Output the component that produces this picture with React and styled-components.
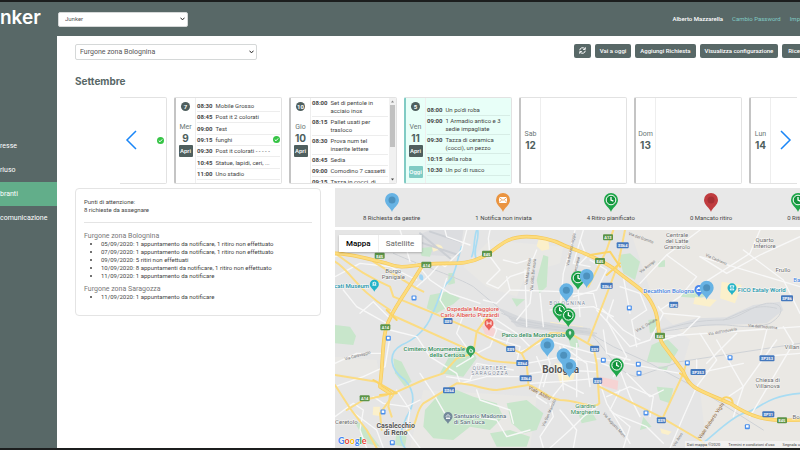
import React, { useState } from "react";
import styled, { createGlobalStyle, css } from "styled-components";

const DAYS = [
  {
    id: "wed",
    name: "Mer",
    number: 9,
    count: 7,
    spread: true,
    items: [
      ["08:30", "Mobile Grosso"],
      ["08:45", "Post it 2 colorati"],
      ["09:00", "Test"],
      ["09:15", "funghi", true],
      ["09:30", "Post it colorati - - - - -"],
      ["10:45", "Statue, lapidi, ceri, ..."],
      ["11:00", "Uno stadio"],
    ],
  },
  {
    id: "thu",
    name: "Gio",
    number: 10,
    count: 10,
    scroll: true,
    items: [
      ["08:00", "Set di pentole in acciaio inox"],
      ["08:15", "Pallet usati per trasloco"],
      ["08:30", "Prova num tel inserite lettere"],
      ["08:45", "Sedia"],
      ["09:00", "Comodino 7 cassetti"],
      ["09:15", "Tazza in cocci, di"],
    ],
  },
  {
    id: "fri",
    name: "Ven",
    number: 11,
    count: 5,
    today: true,
    items: [
      ["08:00", "Un po'di roba"],
      ["09:00", "1 Armadio antico e 3 sedie impagliate"],
      ["09:30", "Tazza di ceramica (cocci), un pezzo"],
      ["10:15", "della roba"],
      ["10:30", "Un po' di rusco"],
    ],
  },
  { id: "sat", name: "Sab", number: 12, items: [] },
  { id: "sun", name: "Dom", number: 13, items: [] },
  { id: "mon", name: "Lun", number: 14, items: [] },
];

const NOTICES = [
  {
    title: "Furgone zona Bolognina",
    rows: [
      "05/09/2020: 1 appuntamento da notificare, 1 ritiro non effettuato",
      "07/09/2020: 1 appuntamento da notificare, 1 ritiro non effettuato",
      "09/09/2020: 5 ritiri non effettuati",
      "10/09/2020: 8 appuntamenti da notificare, 1 ritiro non effettuato",
      "11/09/2020: 1 appuntamento da notificare",
    ],
  },
  {
    title: "Furgone zona Saragozza",
    rows: ["11/09/2020: 1 appuntamento da notificare"],
  },
];

const LEGEND = [
  { kind: "todo", label: "8 Richiesta da gestire" },
  { kind: "mail", label: "1 Notifica non inviata" },
  { kind: "planned", label: "4 Ritiro pianificato" },
  { kind: "missed", label: "0 Mancato ritiro" },
  { kind: "planned", label: "0 Ritirati" },
];

// map drawing units: three to one pixel
const PARKS = [
  "M15 285L60 290L78 318L70 345L15 340Z",
  "M300 195L350 185L390 205L370 222L320 250L290 235Z",
  "M355 130L372 128L375 160L355 165Z",
  "M268 55L310 50L300 80L275 78Z",
  "M640 75L655 80L650 170L628 190L620 150Z",
  "M545 205L585 208L560 230Z",
  "M865 75L900 70L930 95L915 150L880 130Z",
  "M360 375L420 350L440 385L400 440L330 430Z",
  "M955 270L985 265L985 300L960 310Z",
  "M965 345L1010 325L1045 360L1020 400L950 395Z",
  "M715 325L740 320L748 350L725 360Z",
  "M980 470L1030 475L1020 520L990 510Z",
  "M940 560L965 590L930 600Z",
  "M745 550L785 545L800 570L755 580Z",
  "M330 490L380 480L430 500L500 520L520 560L480 600L420 590L370 630L310 625L280 590L285 540Z",
  "M530 520L590 510L640 550L620 600L580 610L545 580Z",
  "M480 610L540 600L600 620L590 650L500 650Z",
  "M190 385L215 395L245 455L225 470L195 430Z",
  "M70 570L100 585L150 650L110 640Z",
  "M200 600L230 620L225 650L195 645Z",
  "M1060 185L1110 178L1135 195L1110 205L1050 200Z",
  "M985 95L1005 90L1005 110L985 112Z",
  "M985 410L1015 408L1010 420L985 420Z",
];

const SAND = [
  "M625 30L655 28L658 58L635 62L620 48Z",
  "M1175 155L1235 165L1215 220L1170 205Z",
  "M1095 200L1160 210L1140 230L1090 222Z",
  "M675 400L740 405L730 450L690 460Z",
  "M305 50C315 38 345 42 338 65L325 60L310 65Z",
  "M660 275L760 290L755 300L665 290Z",
  "M130 530L150 530L148 558L128 555Z",
  "M990 595L1025 605L1015 615L995 610Z",
];

const HOSPITALS = [
  "M455 288L492 285L498 315L470 325Z",
  "M810 440L865 452L862 480L810 465Z",
];

const WATER = [
  "M443 0C450 30 425 60 440 90",
  "M440 0C430 30 435 60 425 80",
  "M395 50C380 90 378 130 360 150C330 175 325 220 305 255C290 300 250 330 215 345C170 370 180 420 225 450C260 490 250 530 230 560C215 600 200 620 225 654",
  "M1100 654C1150 620 1190 570 1240 550C1290 540 1300 500 1410 490",
];

const RAILS = [
  "M510 240C540 260 560 290 600 290L780 310L850 350L960 400L1110 480L1300 600",
  "M515 250C560 270 600 275 650 285L800 310",
  "M545 275L640 290L770 296",
  "M540 265L620 280L760 305",
  "M980 305C1060 280 1110 270 1180 270C1230 265 1260 230 1310 220C1360 215 1370 250 1320 280C1280 295 1240 290 1190 285C1100 280 1060 300 980 305",
  "M1180 270C1250 240 1280 220 1340 235",
  "M190 70C280 110 380 140 430 170L520 245",
  "M780 310C840 370 860 430 920 440L1050 395L1410 340",
];

const STREETS = [
  "M15 140L90 100L180 110L260 150",
  "M15 80L65 60L120 65",
  "M90 250L130 215L175 260",
  "M40 180L80 230L170 280",
  "M180 320L165 410L100 440L15 470",
  "M210 0L230 60L240 95",
  "M410 0L395 60L345 110L330 100L300 135L260 170",
  "M260 100L300 150L360 190L450 220",
  "M350 145L330 210L350 240",
  "M345 0L350 20L420 45",
  "M480 0L475 25L480 80L510 120L470 160L505 175L540 140L600 120",
  "M520 90L560 100L610 85L620 60",
  "M530 140L540 180L700 185",
  "M540 180L500 220L460 210",
  "M585 120L590 290",
  "M612 110L600 220L560 270",
  "M630 190L640 290",
  "M735 0L720 60L700 130L690 240",
  "M760 0L730 100L780 110",
  "M750 30L770 80L740 110L750 260",
  "M780 90L830 120L800 180L730 200",
  "M660 240L790 230L850 260",
  "M800 240L900 350L960 330L1000 250L985 230",
  "M815 235L880 300L930 330",
  "M850 210L830 270L890 380L850 440",
  "M870 170L930 190L950 240L905 270L920 350",
  "M820 300L830 370L900 390",
  "M800 385L860 395L1050 430",
  "M720 190L790 190L800 230",
  "M880 140L900 250",
  "M930 160L1010 75L1110 0",
  "M1010 75L1100 140L1050 200L990 240",
  "M1110 80L1410 170",
  "M1110 80L1190 130L1290 75L1410 20",
  "M1240 60L1360 150L1410 250",
  "M1290 0L1260 70L1080 185",
  "M1000 250L1110 260L1060 310L1000 330",
  "M990 320L1410 290",
  "M1110 310L1160 390L1100 470L1060 560L1020 654",
  "M1160 330L1240 470L1180 510",
  "M1220 310L1130 400",
  "M1310 300L1290 380L1410 370",
  "M1340 330L1240 470L1210 560",
  "M1360 290L1390 340L1260 560",
  "M1100 390L1100 430L1240 400",
  "M560 370L650 330L700 345L790 370",
  "M590 400L700 380L800 400",
  "M600 430L680 420L800 425",
  "M600 460L690 455L800 445",
  "M640 340L660 400L640 470",
  "M690 350L700 480",
  "M740 340L740 500",
  "M620 380L640 430L620 500L650 520",
  "M660 510L700 460L760 490",
  "M700 350L770 400L780 470",
  "M815 400L870 420L900 500L930 560",
  "M810 460L830 520L860 570L900 640",
  "M830 500L900 470L970 500L960 560",
  "M870 480L840 540L900 590L880 654",
  "M890 430L960 500L1000 480",
  "M800 530L760 560L720 600L660 654",
  "M660 520L670 560L630 620L640 654",
  "M690 540L740 600L730 654",
  "M850 550L950 590L1000 640",
  "M400 255L380 310L430 380L380 410",
  "M440 230L460 280L540 310L530 340",
  "M470 240L500 300L480 350L440 370",
  "M450 310L570 350L560 400",
  "M500 270L560 310L600 350",
  "M270 430L310 490L350 560",
  "M300 380L380 430L390 460L470 440L590 440",
  "M350 440L420 450L440 400L550 420",
  "M200 480L240 540L230 600L270 654",
  "M130 500L160 520L230 530L270 510",
  "M180 300L260 320L300 380",
  "M15 400L80 370L160 370",
  "M15 560L70 520L100 540L90 600L110 654",
  "M60 540L140 600L160 654",
  "M440 560L500 570L530 620L600 600",
  "M440 480L450 510L540 540L550 580",
];

const MAIN_ROADS = [
  "M15 70C60 100 90 130 180 170L190 200L300 245L440 305L575 370L590 400L595 460",
  "M15 95C60 120 80 180 180 240",
  "M130 95L260 175L280 185",
  "M185 255L440 370C470 400 520 395 570 400",
  "M575 370L660 310L720 310L790 350L800 400L808 520C790 540 740 510 690 510C650 505 640 480 595 465",
  "M775 335L835 180L865 100L885 0",
  "M775 170L830 60L850 0",
  "M190 490L280 450L340 430L380 385L430 370L440 305L480 250",
  "M180 495L175 530L185 560M225 605C270 590 250 550 280 520L380 460C430 460 460 480 500 480L595 465",
  "M15 465L60 535L110 600L140 654",
  "M808 470L990 560L1110 630L1130 650",
  "M1000 560L1060 430L1070 395",
  "M15 435L140 455L190 495L150 550L155 600",
  "M50 540L100 510L170 495",
];

const HIGHWAYS = [
  "M15 70C60 70 130 90 170 100C220 120 240 105 290 103C360 95 400 110 460 80C500 60 520 20 590 20C640 20 670 30 700 45C760 70 800 80 850 115C930 180 950 180 975 240C990 280 980 320 1000 345L1060 425C1080 480 1110 480 1200 520C1260 560 1300 575 1410 570",
  "M275 110C240 170 200 220 180 265C160 300 160 350 155 420L150 470L180 490",
];

const SHIELDS = [
  [149, 77, "E45", "green"],
  [289, 104, "A14", "green"],
  [471, 71, "E45", "green"],
  [834, 22, "A13", "green"],
  [810, 93, "E45", "green"],
  [166, 292, "A14", "green"],
  [104, 505, "A14", "green"],
  [990, 317, "E45", "green"],
  [1356, 571, "E45", "green"],
  [878, 46, "SS64"],
  [830, 167, "SS64"],
  [1031, 224, "SP5"],
  [1371, 205, "SP86"],
  [354, 273, "SS9"],
  [542, 357, "SS9"],
  [577, 399, "SS64"],
  [587, 445, "SS64"],
  [357, 481, "SS64"],
  [794, 356, "SS9"],
  [803, 452, "SS9"],
  [1104, 426, "SP253"],
  [1311, 385, "SP253"],
  [994, 571, "SS9"],
  [1315, 553, "SP31"],
];

const STATIONS = [
  [252, 204],
  [175, 325],
  [159, 546],
  [187, 638],
  [898, 234],
  [820, 391],
  [925, 403],
  [927, 430],
  [1072, 399],
  [1200, 383],
  [948, 549],
  [1252, 590],
];

const STREET_NAMES = [
  [45, 391, -15, "Via Caravaggio"],
  [592, 165, -82, "Via Marco Polo"],
  [608, 182, -84, "Via della Beverara"],
  [716, 108, -78, "Via dell'Arcoveggio"],
  [735, 150, -78, "Via Ferrarese"],
  [895, 14, 20, "Via del Gomito"],
  [932, 130, -38, "Via Rovigo"],
  [1126, 78, 24, "Via Cadriano"],
  [920, 307, -30, "Via S. Donato"],
  [1135, 316, -10, "Via dell'Industria"],
  [1254, 290, 5, "Via dell'Industria"],
  [643, 590, -66, "Via San Mamolo"],
  [818, 552, 48, "Via Augusto Murri"],
  [1035, 650, -58, "Via Arno"],
];

const PLACES = [
  [190, 129, ["Borgo", "Panigale"], "#6b6b6b", 6],
  [1041, 21, ["Centrale", "del Latte", "Granarolo"], "#6b6b6b", 6],
  [1304, 37, ["Quarto", "Inferiore"], "#6b6b6b", 6],
  [1359, 126, ["Frullo"], "#6b6b6b", 6],
  [1386, 357, ["Villan"], "#6b6b6b", 6],
  [1313, 455, ["Chiesa di", "Villanova"], "#6b6b6b", 6],
  [1398, 567, ["Bo"], "#6b6b6b", 6],
  [49, 583, ["Ceretolo"], "#6b6b6b", 6],
  [766, 533, ["Giardini", "Margherita"], "#2f8a58", 6],
  [1400, 157, ["Ba"], "#3f7fe0", 6],
];

const POI_LABELS = [
  [117, 175, ["cati Museum"], "#1b93a8", "end"],
  [507, 242, ["Ospedale Maggiore", "Carlo Alberto Pizzardi"], "#e0514a", "end"],
  [706, 322, ["Parco della Montagnola"], "#2f8a58", "end"],
  [405, 364, ["Cimitero Monumentale", "della Certosa"], "#2f8a58", "end"],
  [371, 563, ["Santuario Madonna", "di San Luca"], "#607684", "start"],
  [1092, 190, ["Decathlon Bologna"], "#3f7fe0", "end"],
  [1223, 187, ["FICO Eataly World"], "#1b93a8", "start"],
];

const POIS = [
  [133, 185, "#22b3c8", "M-2 1H2M-2 -1L0 -2L2 -1M-1 1V-1M1 1V-1"],
  [477, 302, "#ea5f57", "M-2 -2V2M2 -2V2M-2 0H2"],
  [422, 383, "#33a35c", "M-1 2V0A1 1 0 1 1 1 0H2V2Z"],
  [720, 332, "#33a35c", "M0 2V0M-1 0L0 -2L1 0Z"],
  [354, 582, "#73899a", "M-2 2H2M-2 0L0 -2L2 0M-1 0V2M1 0V2"],
  [1107, 201, "#4a86ee", "M-2 -1H2V2H-2ZM-1 -1V-2H1V-1"],
  [1206, 196, "#22b3c8", "M-2 -2H2L1 0V1L2 2H-2L-1 1V0Z"],
];

const MARKERS = [
  [744, 180, "planned"],
  [770, 174, "todo"],
  [709, 217, "todo"],
  [689, 277, "planned"],
  [715, 292, "planned"],
  [652, 381, "todo"],
  [718, 443, "todo"],
  [701, 412, "todo"],
  [860, 442, "planned"],
  [1130, 209, "todo"],
];

const PIN_COLORS = {
  todo: "#67b3e4",
  mail: "#ea9440",
  planned: "#1fa64a",
  missed: "#c03c3f",
};

const place = (x, y) => `translate(${(x - 15) / 3} ${y / 3})`;

function PinShape({ kind }) {
  return (
    <g>
      <path
        d="M0 0C-1 -4 -7 -7 -7 -12A7 7 0 1 1 7 -12C7 -7 1 -4 0 0Z"
        fill={PIN_COLORS[kind]}
      />
      {kind === "todo" && <circle cy="-12" r="3.5" fill="#4d91bd" />}
      {kind === "missed" && <circle cy="-12" r="3.5" fill="#a52f33" />}
      {kind === "mail" && (
        <g>
          <rect x="-4" y="-15" width="8" height="6" rx="0.6" fill="#fff" />
          <path d="M-4 -14.6L0 -11.6L4 -14.6M-4 -9.4L-1.4 -12M4 -9.4L1.4 -12" fill="none" stroke="#ea9440" strokeWidth="0.8" />
        </g>
      )}
      {kind === "planned" && (
        <g>
          <circle cy="-12" r="4.8" fill="#12933c" stroke="#fff" strokeWidth="1" />
          <path d="M0 -15V-12L2.4 -10.8" fill="none" stroke="#fff" strokeWidth="1.3" />
        </g>
      )}
    </g>
  );
}

function CheckMark() {
  return (
    <Check viewBox="0 0 14 14" aria-label="Confermato">
      <circle cx="7" cy="7" r="7" fill="#35c445" />
      <path d="M3.5 7.2L6 9.6L10.4 4.8" fill="none" stroke="#fff" strokeWidth="2" />
    </Check>
  );
}

function Day({ day }) {
  return (
    <DayCard $today={day.today}>
      <DaySide $empty={!day.count}>
        {day.count && <Count>{day.count}</Count>}
        <DayName>{day.name}</DayName>
        <DayNumber>{day.number}</DayNumber>
        {day.count && <DayButton type="button">Apri</DayButton>}
        {day.today && (
          <DayButton type="button" $light>
            Oggi
          </DayButton>
        )}
      </DaySide>
      <Agenda $spread={day.spread} $centered={day.today}>
        {day.items.map(([time, text, done]) => (
          <AgendaRow key={time}>
            <Time>{time}</Time>
            <AgendaText>{text}</AgendaText>
            {done && <CheckMark />}
          </AgendaRow>
        ))}
      </Agenda>
      {day.scroll && (
        <ScrollTrack aria-hidden="true">
          <svg width="7" height="7" viewBox="0 0 7 7">
            <path d="M2 4.5L3.5 2.5L5 4.5Z" fill="#888" />
          </svg>
          <ScrollThumb />
          <svg width="7" height="7" viewBox="0 0 7 7">
            <path d="M2 2.5L3.5 4.5L5 2.5Z" fill="#444" />
          </svg>
        </ScrollTrack>
      )}
    </DayCard>
  );
}

function Lines({ rows, step, ...rest }) {
  return (
    <text {...rest}>
      {rows.map((row, i) => (
        <tspan key={row} x="0" dy={i ? step : 0}>
          {row}
        </tspan>
      ))}
    </text>
  );
}

function CityMap() {
  return (
    <MapSvg viewBox="0 0 465 218" preserveAspectRatio="xMinYMin slice" aria-label="Mappa di Bologna">
      <g transform="scale(0.333333) translate(-15 0)" fill="none" strokeLinejoin="round" strokeLinecap="round">
        <rect x="0" y="0" width="1420" height="660" fill="#e5e5e5" />
        <path d="M900 0H1420V660H1130L1110 480L1060 400L1080 330L980 240L950 150Z" fill="#eae8e4" />
        <path d="M480 30L700 50L690 100L590 130L560 200L470 170L400 110Z" fill="#e9e8e5" />
        <path d="M15 380L140 390L150 450L15 430ZM280 480L620 500L600 654H240Z" fill="#e9e8e5" />
        <path d="M230 30L300 0L400 0L390 80L290 75Z" fill="#dcdde0" />
        {PARKS.map((d) => (
          <path key={d} d={d} fill="#c8e6cb" />
        ))}
        {SAND.map((d) => (
          <path key={d} d={d} fill="#fbf0cb" />
        ))}
        {HOSPITALS.map((d) => (
          <path key={d} d={d} fill="#f6d3d3" />
        ))}
        <path d="M510 235L580 265L640 275L780 295L800 320L640 300L560 290Z" fill="#d6d8db" />
        <path d="M980 300L1100 265L1190 262L1270 225L1350 215L1360 240L1310 280L1180 285L1080 290Z" fill="#dcdee1" />
        {WATER.map((d) => (
          <path key={d} d={d} stroke="#a8dcf3" strokeWidth="5" />
        ))}
        <path d="M268 135C275 128 284 140 278 152C268 150 266 142 268 135Z" fill="#9ed4f5" />
        {RAILS.map((d) => (
          <path key={d} d={d} stroke="#cfd2d6" strokeWidth="3" />
        ))}
        <path d="M235 25L385 75M270 10L360 85M300 5L390 35" stroke="#cccfd4" strokeWidth="6" />
        {STREETS.map((d) => (
          <path key={d} d={d} stroke="#f8f8f8" strokeWidth="4" />
        ))}
        {MAIN_ROADS.map((d) => (
          <path key={d} d={d} stroke="#fbdc83" strokeWidth="6" />
        ))}
        {HIGHWAYS.map((d) => (
          <path key={d} d={d} stroke="#f5c95c" strokeWidth="11" />
        ))}
        {HIGHWAYS.map((d) => (
          <path key={d} d={d} stroke="#fddc7c" strokeWidth="7" />
        ))}
        <path
          d="M780 75L840 65L870 110M830 135L870 100M130 450L200 490L150 495M1175 510A18 18 0 0 1 1208 518M1050 430L1075 450M170 240L200 270"
          stroke="#fbd468"
          strokeWidth="6"
        />
      </g>

      {STREET_NAMES.map(([x, y, angle, name]) => (
        <StreetName key={`${x}-${y}`} transform={`${place(x, y)} rotate(${angle})`}>
          {name}
        </StreetName>
      ))}
      <RoadName transform={`${place(594, 476)} rotate(28)`}>Viale Aldini</RoadName>
      <RoadName transform={`${place(1112, 628)} rotate(-56)`}>Viale Roberto Vighi</RoadName>

      {SHIELDS.map(([x, y, name, color]) => {
        const width = name.length * 3 + (color ? 1 : 0);
        return (
          <g key={`${x}-${y}`} transform={place(x, y)}>
            <rect x={-width / 2} y="-3" width={width} height="6" rx="1" fill={color ? "#5c9448" : "#4478bd"} />
            <ShieldText y="2">{name}</ShieldText>
          </g>
        );
      })}
      {STATIONS.map(([x, y]) => (
        <g key={`${x}-${y}`} transform={place(x, y)}>
          <rect x="-2.5" y="-2.5" width="5" height="5" rx="1" fill="#4b90ec" />
          <rect x="-1.3" y="-1.5" width="2.6" height="2.4" fill="#fff" />
        </g>
      ))}

      {PLACES.map(([x, y, rows, color, size]) => (
        <g key={rows[0]} transform={place(x, y)}>
          <PlaceName as={Lines} rows={rows} step={6} fill={color} fontSize={size} />
        </g>
      ))}
      <g transform={place(713, 215)}>
        <Quarter as={Lines} rows={["BOLOGNINA"]} step={5} y="3" />
      </g>
      <g transform={place(480, 419)}>
        <Quarter as={Lines} rows={["QUARTIERE", "SARAGOZZA"]} step={5} />
      </g>
      <g transform={place(197, 593)}>
        <TownName as={Lines} rows={["Casalecchio", "di Reno"]} step={7} />
      </g>
      <g transform={place(692, 429)}>
        <CityName>Bologna</CityName>
      </g>
      {POI_LABELS.map(([x, y, rows, color, anchor]) => (
        <g key={rows[0]} transform={place(x, y)}>
          <PoiName as={Lines} rows={rows} step={6} fill={color} textAnchor={anchor} />
        </g>
      ))}
      {POIS.map(([x, y, color, icon]) => (
        <g key={`${x}-${y}`} transform={place(x, y)}>
          <path d="M0 0C-1 -3 -4.5 -4 -4.5 -7.5A4.5 4.5 0 1 1 4.5 -7.5C4.5 -4 1 -3 0 0Z" fill={color} />
          <path d={icon} transform="translate(0 -7.5)" fill="none" stroke="#fff" strokeWidth="0.9" />
        </g>
      ))}
      {MARKERS.map(([x, y, kind]) => (
        <g key={`${x}-${y}`} transform={place(x, y)}>
          <PinShape kind={kind} />
        </g>
      ))}
      <GoogleMark x="3" y="214">
        <tspan fill="#4285f4">G</tspan>
        <tspan fill="#ea4335">o</tspan>
        <tspan fill="#fbbc05">o</tspan>
        <tspan fill="#4285f4">g</tspan>
        <tspan fill="#34a853">l</tspan>
        <tspan fill="#ea4335">e</tspan>
      </GoogleMark>
    </MapSvg>
  );
}

function App() {
  const [mapType, setMapType] = useState("Mappa");

  return (
    <Shell>
      <GlobalStyle />
      <Header>
        <Logo href="#home">nker</Logo>
        <HeaderSelect aria-label="Azienda" defaultValue="Junker">
          <option>Junker</option>
        </HeaderSelect>
        <UserLinks>
          <UserName>Alberto Mazzarella</UserName>
          <UserLink href="#password">Cambio Password</UserLink>
          <UserLink href="#settings">Imp</UserLink>
        </UserLinks>
      </Header>
      <Body>
        <Nav>
          <NavLink href="#interesse">resse</NavLink>
          <NavLink href="#riuso">riuso</NavLink>
          <NavLink href="#ingombranti" $active>
            branti
          </NavLink>
          <NavLink href="#comunicazione">comunicazione</NavLink>
        </Nav>
        <Main>
          <Toolbar>
            <VanSelect aria-label="Furgone" defaultValue="Furgone zona Bolognina">
              <option>Furgone zona Bolognina</option>
            </VanSelect>
            <Actions>
              <ActionButton type="button" aria-label="Aggiorna">
                <svg width="7" height="7" viewBox="0 0 14 14" fill="none" stroke="#fff" strokeWidth="2">
                  <path d="M1.5 6.5A5.5 5.5 0 0 1 11.5 3.8M12.5 7.5A5.5 5.5 0 0 1 2.5 10.2" />
                  <path d="M12.5 0.5V4.8H8.2M1.5 13.5V9.2H5.8" />
                </svg>
              </ActionButton>
              <ActionButton type="button">Vai a oggi</ActionButton>
              <ActionButton type="button">Aggiungi Richiesta</ActionButton>
              <ActionButton type="button">Visualizza configurazione</ActionButton>
              <ActionButton type="button" $flush>
                Rice
              </ActionButton>
            </Actions>
          </Toolbar>
          <Month>Settembre</Month>
          <Carousel>
            <Track>
              <PreviousDay>
                <CheckMark />
              </PreviousDay>
              {DAYS.map((day) => (
                <Day key={day.id} day={day} />
              ))}
            </Track>
            <Arrow type="button" aria-label="Precedente">
              <svg width="12" height="20" viewBox="0 0 12 20">
                <path d="M11 1L2 10L11 19" fill="none" stroke="#1a86f7" strokeWidth="1.5" />
              </svg>
            </Arrow>
            <Arrow type="button" aria-label="Successivo" $next>
              <svg width="12" height="20" viewBox="0 0 12 20">
                <path d="M1 1L10 10L1 19" fill="none" stroke="#1a86f7" strokeWidth="1.5" />
              </svg>
            </Arrow>
          </Carousel>
          <Columns>
            <Notices>
              <Summary>
                Punti di attenzione:
                <br />8 richieste da assegnare
              </Summary>
              {NOTICES.map((notice) => (
                <section key={notice.title}>
                  <NoticeTitle>{notice.title}</NoticeTitle>
                  <NoticeList>
                    {notice.rows.map((row) => (
                      <li key={row}>{row}</li>
                    ))}
                  </NoticeList>
                </section>
              ))}
            </Notices>
            <MapColumn>
              <Legend>
                {LEGEND.map((item) => (
                  <LegendItem key={item.label}>
                    <svg width="16" height="20" viewBox="-8 -20 16 20">
                      <PinShape kind={item.kind} />
                    </svg>
                    {item.label}
                  </LegendItem>
                ))}
              </Legend>
              <MapBox>
                <CityMap />
                <MapTypes>
                  {["Mappa", "Satellite"].map((type) => (
                    <MapType
                      key={type}
                      type="button"
                      $active={mapType === type}
                      onClick={() => setMapType(type)}
                    >
                      {type}
                    </MapType>
                  ))}
                </MapTypes>
                <Credits>
                  <span>Dati mappa ©2020</span>
                  <a href="#termini">Termini e condizioni d'uso</a>
                  <a href="#segnala">Segnala u</a>
                </Credits>
              </MapBox>
            </MapColumn>
          </Columns>
        </Main>
      </Body>
    </Shell>
  );
}

const GlobalStyle = createGlobalStyle`
  * {
    box-sizing: border-box;
  }

  body {
    margin: 0;
    font-family: Roboto, "Liberation Sans", sans-serif;
    font-size: 6px;
    line-height: 8px;
    color: #444;
    background: #fff;
  }

  button,
  select {
    font-family: inherit;
    font-size: inherit;
    line-height: inherit;
  }

  a {
    color: inherit;
    text-decoration: none;
  }
`;

const Shell = styled.div`
  display: flex;
  flex-direction: column;
  min-height: 100vh;
  overflow: hidden;
  border-top: 2px solid #1c1e1e;
  border-bottom: 2px solid #1c1e1e;
`;

const Header = styled.header`
  display: flex;
  align-items: center;
  height: 34px;
  overflow: hidden;
  background: #586867;
`;

const Logo = styled.a`
  flex: 0 0 58px;
  padding-bottom: 2px;
  font-family: Inter, sans-serif;
  font-size: 19px;
  font-weight: 600;
  line-height: 24px;
  color: #fff;
`;

const selectStyle = css`
  appearance: none;
  border: 1px solid #d5d8d8;
  border-radius: 2px;
  color: #555;
  background: #fff
    url("data:image/svg+xml,%3Csvg xmlns='http://www.w3.org/2000/svg' width='5' height='4'%3E%3Cpath d='M.5 .7L2.5 2.9L4.5 .7' fill='none' stroke='%23222' stroke-width='1'/%3E%3C/svg%3E")
    no-repeat right 2px center;
`;

const HeaderSelect = styled.select`
  ${selectStyle}
  width: 130px;
  height: 15px;
  padding: 0 6px;
`;

const UserLinks = styled.div`
  display: flex;
  gap: 9px;
  margin-left: auto;
  white-space: nowrap;
`;

const UserName = styled.span`
  font-weight: 500;
  color: #fff;
`;

const UserLink = styled.a`
  color: #80cbc4;
`;

const Body = styled.div`
  display: flex;
  flex: 1;
`;

const Nav = styled.nav`
  flex: 0 0 57px;
  padding-top: 98px;
  background: #586867;
`;

const NavLink = styled.a`
  display: flex;
  align-items: center;
  height: 24px;
  font-size: 7px;
  color: #fff;
  background: ${(props) => (props.$active ? "#62ae8a" : "transparent")};
`;

const Main = styled.main`
  flex: 1;
  min-width: 0;
  display: flex;
  flex-direction: column;
  padding: 8px 0 0 18px;
`;

const Toolbar = styled.div`
  display: flex;
  justify-content: space-between;
`;

const VanSelect = styled.select`
  ${selectStyle}
  width: 182px;
  height: 16px;
  padding: 0 4px;
  font-size: 7px;
`;

const Actions = styled.div`
  display: flex;
  gap: 4px;
`;

const ActionButton = styled.button`
  height: 14px;
  padding: ${(props) => (props.$flush ? "0 0 0 6px" : "0 5px")};
  border: 0;
  border-radius: ${(props) => (props.$flush ? "2px 0 0 2px" : "2px")};
  font-weight: 500;
  white-space: nowrap;
  color: #fff;
  background: #586867;
`;

const Month = styled.h1`
  margin: 14px 0 9px;
  font-family: Inter, sans-serif;
  font-size: 10px;
  font-weight: 700;
  line-height: 14px;
  color: #586867;
`;

const Carousel = styled.section`
  position: relative;
  margin: 0 3px 0 45px;
`;

const Track = styled.div`
  display: flex;
  gap: 7px;
  overflow: hidden;
`;

const PreviousDay = styled.div`
  flex: 0 0 47px;
  display: flex;
  align-items: center;
  justify-content: flex-end;
  height: 87px;
  padding-right: 2px;
  border: 1px solid #e2e2e2;
  border-left: 0;
  border-radius: 0 2px 2px 0;
`;

const DayCard = styled.article`
  flex: 0 0 108px;
  display: flex;
  height: 87px;
  overflow: hidden;
  border: 1px solid #e2e2e2;
  border-left: 2px solid ${(props) => (props.$today ? "#80cbc4" : "#c4c4c4")};
  border-radius: 2px;
  background: ${(props) => (props.$today ? "#e8fff8" : "#fff")};
`;

const DaySide = styled.div`
  flex: 0 0 20px;
  display: flex;
  flex-direction: column;
  align-items: center;
  justify-content: ${(props) => (props.$empty ? "center" : "flex-start")};
  padding-top: ${(props) => (props.$empty ? 0 : "4px")};
  border-right: 1px solid #eee;
`;

const Count = styled.span`
  width: 9px;
  height: 9px;
  margin-bottom: 12px;
  border-radius: 50%;
  font-weight: 700;
  line-height: 9px;
  text-align: center;
  color: #fff;
  background: #4f5f5e;
`;

const DayName = styled.span`
  font-size: 7px;
  color: #6a7675;
`;

const DayNumber = styled.strong`
  font-family: Inter, sans-serif;
  font-size: 10px;
  line-height: 14px;
  color: #4f5f5e;
`;

const DayButton = styled.button`
  width: 14px;
  height: 12px;
  padding: 0;
  border: 0;
  border-radius: 1px;
  font-weight: 500;
  color: #fff;
  background: ${(props) => (props.$light ? "#80cbc4" : "#4f5f5e")};

  & + & {
    margin-top: 9px;
  }
`;

const Agenda = styled.div`
  flex: 1;
  min-width: 0;
  display: flex;
  flex-direction: column;
  justify-content: ${(props) => {
    if (props.$spread) return "space-between";
    return props.$centered ? "center" : "flex-start";
  }};
  padding: ${(props) => (props.$spread ? "3px 1px" : "0 1px")};
`;

const AgendaRow = styled.div`
  flex: none;
  display: flex;
  gap: 3px;
  padding: 1px 0;
  border-bottom: 1px solid rgba(0, 0, 0, 0.07);
`;

const Time = styled.strong`
  flex: 0 0 15px;
  font-weight: 700;
`;

const AgendaText = styled.span`
  flex: 1;
`;

const Check = styled.svg`
  flex: none;
  width: 7px;
  height: 7px;
`;

const ScrollTrack = styled.div`
  flex: 0 0 7px;
  display: flex;
  flex-direction: column;
  background: #f1f1f1;
`;

const ScrollThumb = styled.div`
  height: 42px;
  margin: 0 1px auto;
  background: #c1c1c1;
`;

const Arrow = styled.button`
  position: absolute;
  top: 33px;
  ${(props) => (props.$next ? "right: 5px" : "left: 5px")};
  height: 20px;
  padding: 0;
  border: 0;
  background: none;
`;

const Columns = styled.div`
  flex: 1;
  display: flex;
  align-items: flex-start;
  gap: 14px;
  padding-top: 4px;
`;

const Notices = styled.section`
  flex: 0 0 246px;
  padding: 9px 8px;
  border: 1px solid #e4e4e4;
  border-radius: 4px;
`;

const Summary = styled.p`
  margin: 0 0 9px;
  padding-bottom: 8px;
  border-bottom: 1px solid #e4e4e4;
`;

const NoticeTitle = styled.h2`
  margin: 0;
  font-size: 7px;
  font-weight: 400;
  color: #777;
`;

const NoticeList = styled.ul`
  margin: 0 0 5px;
  padding-left: 17px;
`;

const MapColumn = styled.div`
  flex: 1;
  align-self: stretch;
  min-width: 0;
  display: flex;
  flex-direction: column;
  gap: 3px;
`;

const Legend = styled.div`
  display: flex;
  gap: 55px;
  height: 39px;
  padding: 4px 0 0 28px;
  overflow: hidden;
  background: #e8e8e8;
`;

const LegendItem = styled.div`
  flex: none;
  display: flex;
  flex-direction: column;
  align-items: center;
  gap: 2px;
  white-space: nowrap;
`;

const MapBox = styled.div`
  position: relative;
  flex: 1;
  min-height: 218px;
  overflow: hidden;
  background: #e6e6e6;
`;

const MapSvg = styled.svg`
  display: block;
  width: 100%;
  height: 100%;
`;

const MapTypes = styled.div`
  position: absolute;
  top: 5px;
  left: 4px;
  display: flex;
  box-shadow: 0 1px 2px rgba(0, 0, 0, 0.25);
`;

const MapType = styled.button`
  height: 17px;
  padding: 0 7px;
  border: 0;
  border-right: 1px solid #eee;
  font-size: 8px;
  font-weight: ${(props) => (props.$active ? 500 : 400)};
  color: ${(props) => (props.$active ? "#000" : "#666")};
  background: #fff;
`;

const Credits = styled.div`
  position: absolute;
  right: 0;
  bottom: 0;
  display: flex;
  gap: 8px;
  padding-left: 2px;
  font-size: 4px;
  line-height: 7px;
  white-space: nowrap;
  color: #444;
  background: rgba(245, 245, 245, 0.7);
`;

const halo = css`
  paint-order: stroke;
  stroke: rgba(255, 255, 255, 0.8);
  stroke-width: 1px;
`;

const StreetName = styled.text`
  font-size: 4px;
  fill: #777;
`;

const RoadName = styled.text`
  font-size: 5px;
  fill: #8a6434;
`;

const ShieldText = styled.text`
  font-size: 4px;
  font-weight: 700;
  text-anchor: middle;
  fill: #fff;
`;

const PlaceName = styled.text`
  ${halo}
  text-anchor: middle;
`;

const PoiName = styled.text`
  ${halo}
  font-size: 6px;
  font-weight: 500;
`;

const Quarter = styled.text`
  ${halo}
  font-size: 5px;
  letter-spacing: 1px;
  text-anchor: middle;
  fill: #7d8799;
`;

const TownName = styled.text`
  ${halo}
  font-size: 7px;
  font-weight: 700;
  text-anchor: middle;
  fill: #555;
`;

const CityName = styled.text`
  ${halo}
  font-size: 10px;
  font-weight: 700;
  text-anchor: middle;
  fill: #555;
`;

const GoogleMark = styled.text`
  ${halo}
  font-family: Lato, sans-serif;
  font-size: 9px;
  font-weight: 700;
`;

export default App;
